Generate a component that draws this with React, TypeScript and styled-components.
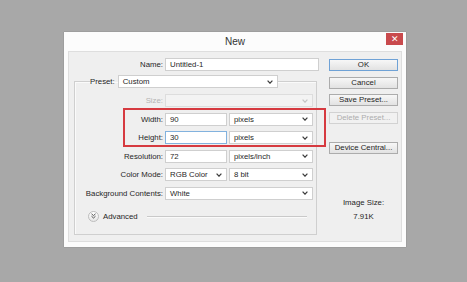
import styled, { createGlobalStyle } from "styled-components";

const GlobalStyle = createGlobalStyle`
  html, body {
    margin: 0;
    padding: 0;
    background: #a8a8a8;
  }
  body {
    width: 467px;
    height: 282px;
    overflow: hidden;
    font-family: "Liberation Sans", Arial, sans-serif;
    font-size: 7.8px;
    color: #1f1f1f;
  }
`;

const Stage = styled.div`
  padding: 32px 0 0 64px;
`;

const Dialog = styled.div`
  width: 342px;
  height: 215px;
  box-sizing: border-box;
  padding: 0 4px 5px;
  background: #fcfcfc;
  box-shadow: 0 0 1px rgba(0, 0, 0, 0.35);
  display: flex;
  flex-direction: column;
`;

const TitleBar = styled.div`
  height: 19px;
  display: grid;
  grid-template-columns: 1fr auto 1fr;
  align-items: center;
`;

const Title = styled.div`
  grid-column: 2;
  font-size: 10px;
  color: #333;
`;

const CloseButton = styled.div`
  grid-column: 3;
  justify-self: end;
  align-self: start;
  margin: 1px -1px 0 0;
  width: 17px;
  height: 12px;
  background: #c94a4d;
  color: #fff;
  font-size: 9px;
  line-height: 12px;
  text-align: center;
`;

const Panel = styled.div`
  flex: 1;
  background: #efefef;
  border: 1px solid #dedede;
  display: grid;
  grid-template-columns: 1fr 69px;
  column-gap: 10px;
  padding: 6px 3px 0 0;
`;

const Form = styled.div`
  display: flex;
  flex-direction: column;
`;

const NameRow = styled.div`
  display: grid;
  grid-template-columns: 94px 154px;
  column-gap: 2px;
  height: 13px;
`;

const Label = styled.div<{ $disabled?: boolean }>`
  text-align: right;
  line-height: 13px;
  white-space: nowrap;
  color: ${(p) => (p.$disabled ? "#b4b4b4" : "#1f1f1f")};
`;

const Group = styled.fieldset`
  margin: 4px 0 0 5px;
  padding: 0 0 12px;
  width: 243px;
  box-sizing: border-box;
  border: 1px solid #cfcfcf;
  box-shadow: inset 1px 1px 0 #fafafa;
  min-inline-size: 0;
`;

const Legend = styled.legend`
  margin-left: 15px;
  padding: 0;
`;

const LegendInner = styled.div`
  display: flex;
  align-items: center;
  gap: 3px;
  height: 13px;
`;

const Rows = styled.div`
  position: relative;
  margin-top: 6px;
  display: grid;
  grid-template-columns: 88px 62px 84px;
  grid-auto-rows: 13px;
  column-gap: 2px;
  row-gap: 5.6px;
`;

const Field = styled.div<{ $focused?: boolean }>`
  height: 13px;
  box-sizing: border-box;
  background: #fff;
  border: 1px solid ${(p) => (p.$focused ? "#82b2de" : "#cfcfcf")};
  padding-left: 4px;
  line-height: 11px;
`;

const Select = styled.div<{ $span?: number; $width?: number; $disabled?: boolean }>`
  grid-column: span ${(p) => p.$span ?? 1};
  ${(p) => (p.$width ? `width: ${p.$width}px;` : "")}
  height: 13px;
  box-sizing: border-box;
  background: ${(p) => (p.$disabled ? "#f3f3f3" : "#fff")};
  border: 1px solid ${(p) => (p.$disabled ? "#dddddd" : "#cfcfcf")};
  padding: 0 4px;
  display: flex;
  align-items: center;
  justify-content: space-between;
  line-height: 11px;
  color: ${(p) => (p.$disabled ? "#b4b4b4" : "#1f1f1f")};
`;

const Highlight = styled.div`
  position: absolute;
  left: 48px;
  top: 14px;
  width: 203px;
  height: 39px;
  box-sizing: border-box;
  border: 2px solid #d63a40;
  pointer-events: none;
`;

const AdvancedRow = styled.div`
  margin-top: 11px;
  height: 11px;
  padding-left: 13px;
  display: flex;
  align-items: center;
  gap: 4px;
`;

const RoundButton = styled.div`
  width: 11px;
  height: 11px;
  box-sizing: border-box;
  border-radius: 50%;
  border: 1px solid #bdbdbd;
  background: linear-gradient(#ffffff, #e6e6e6);
  display: flex;
  align-items: center;
  justify-content: center;
`;

const Rule = styled.div`
  flex: 1;
  margin: 0 9px 0 5px;
  height: 1px;
  background: #c9c9c9;
  box-shadow: 0 1px 0 #fafafa;
`;

const Side = styled.div`
  margin-top: 1px;
  display: flex;
  flex-direction: column;
  gap: 5.7px;
`;

const Button = styled.div<{ $primary?: boolean; $disabled?: boolean }>`
  height: 12px;
  box-sizing: border-box;
  border: 1px solid ${(p) => (p.$primary ? "#6fa2d6" : p.$disabled ? "#d2d2d2" : "#acacac")};
  background: ${(p) => (p.$disabled ? "#f1f1f1" : "linear-gradient(#f7f7f7, #e2e2e2)")};
  color: ${(p) => (p.$disabled ? "#adadad" : "#1f1f1f")};
  text-align: center;
  line-height: 10px;
  white-space: nowrap;
`;

const Spacer = styled.div<{ $h: number }>`
  height: ${(p) => p.$h}px;
`;

const SizeInfo = styled.div`
  margin-top: 38px;
  display: flex;
  flex-direction: column;
  align-items: center;
  gap: 4px;
  line-height: 10px;
`;

const Chevron = ({ faded }: { faded?: boolean }) => (
  <svg width="6" height="4" viewBox="0 0 6 4">
    <polyline
      points="0.6,0.6 3,3.2 5.4,0.6"
      fill="none"
      stroke={faded ? "#c4c4c4" : "#3c3c3c"}
      strokeWidth="1.2"
    />
  </svg>
);

const App = () => {
  return (
    <>
      <GlobalStyle />
      <Stage>
        <Dialog>
          <TitleBar>
            <Title>New</Title>
            <CloseButton>✕</CloseButton>
          </TitleBar>
          <Panel>
            <Form>
              <NameRow>
                <Label>Name:</Label>
                <Field>Untitled-1</Field>
              </NameRow>
              <Group>
                <Legend>
                  <LegendInner>
                    <Label>Preset:</Label>
                    <Select $width={160}>
                      Custom
                      <Chevron />
                    </Select>
                  </LegendInner>
                </Legend>
                <Rows>
                  <Label $disabled>Size:</Label>
                  <Select $span={2} $disabled>
                    <span />
                    <Chevron faded />
                  </Select>

                  <Label>Width:</Label>
                  <Field>90</Field>
                  <Select>
                    pixels
                    <Chevron />
                  </Select>

                  <Label>Height:</Label>
                  <Field $focused>30</Field>
                  <Select>
                    pixels
                    <Chevron />
                  </Select>

                  <Label>Resolution:</Label>
                  <Field>72</Field>
                  <Select>
                    pixels/inch
                    <Chevron />
                  </Select>

                  <Label>Color Mode:</Label>
                  <Select>
                    RGB Color
                    <Chevron />
                  </Select>
                  <Select>
                    8 bit
                    <Chevron />
                  </Select>

                  <Label>Background Contents:</Label>
                  <Select $span={2}>
                    White
                    <Chevron />
                  </Select>

                  <Highlight />
                </Rows>
                <AdvancedRow>
                  <RoundButton>
                    <svg width="5" height="6" viewBox="0 0 5 6">
                      <polyline points="0.5,0.8 2.5,2.6 4.5,0.8" fill="none" stroke="#555" strokeWidth="1" />
                      <polyline points="0.5,3.2 2.5,5 4.5,3.2" fill="none" stroke="#555" strokeWidth="1" />
                    </svg>
                  </RoundButton>
                  Advanced
                  <Rule />
                </AdvancedRow>
              </Group>
            </Form>
            <Side>
              <Button $primary>OK</Button>
              <Button>Cancel</Button>
              <Button>Save Preset...</Button>
              <Button $disabled>Delete Preset...</Button>
              <Spacer $h={6.5} />
              <Button>Device Central...</Button>
              <SizeInfo>
                <div>Image Size:</div>
                <div>7.91K</div>
              </SizeInfo>
            </Side>
          </Panel>
        </Dialog>
      </Stage>
    </>
  );
};

export default App;
